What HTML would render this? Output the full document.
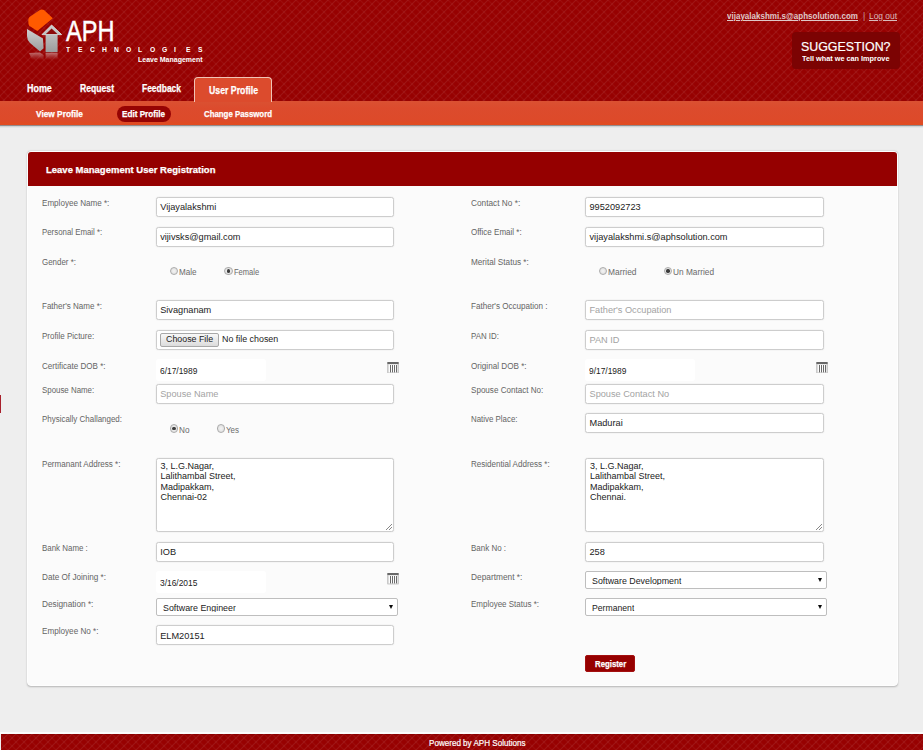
<!DOCTYPE html>
<html>
<head>
<meta charset="utf-8">
<title>Leave Management</title>
<style>
*{box-sizing:border-box;margin:0;padding:0}
html,body{width:923px;height:750px;overflow:hidden}
body{font-family:"Liberation Sans",sans-serif;background:#eeeeee;position:relative;color:#333}
.abs{position:absolute}
.t{white-space:pre;transform-origin:0 0}
#hdr{left:0;top:0;width:923px;height:101px;background:#970101}
#sub{left:0;top:101px;width:923px;height:24px;background:linear-gradient(#da5132,#dc4b2d 30%,#dd4a2a 80%,#e24c1f)}
#subshadow{left:0;top:125px;width:923px;height:3px;background:linear-gradient(#6d5a5a,#c9cfd2 40%,#eeeeee)}
#tab{left:193.5px;top:77px;width:78.5px;height:25px;background:#dc4b2d;border:1px solid #f0c4b6;border-bottom:none;border-radius:4px 4px 0 0}
#pill{left:117px;top:106px;width:54px;height:16px;border-radius:8px;background:#960303}
#sug{left:792px;top:32px;width:108px;height:37px;border-radius:4px;background:#7c0303}
#card{left:27px;top:151px;width:871px;height:534.7px;background:#fbfbfb;border:1px solid #fefefe;border-radius:4px;box-shadow:0 0.6px 1.8px rgba(0,0,0,.24)}
#cardh{left:28px;top:152px;width:869px;height:34px;background:#950000;border-radius:3px 3px 0 0}
.inp{background:#fff;border:1px solid #cdcdcd;border-radius:2.5px;box-shadow:0 0 1.5px rgba(0,0,0,.12)}
.fbtn{background:linear-gradient(#f8f8f8,#dcdcdc);border:1px solid #a8a8a8;border-radius:2px}
.date{background:#fff;width:110px;height:22px;border-radius:3px}
.sel{background:#fff;border:1px solid #bebebe;border-radius:2px;width:241.7px;height:17.3px}
.rad{width:8.5px;height:8.5px;border-radius:50%;border:1px solid #ababab;background:radial-gradient(#f4f4f4,#dadada)}
.rad i{position:absolute;left:1.6px;top:1.6px;width:3.3px;height:3.3px;border-radius:50%;background:#3c3c3c}
#ftrline{left:0;top:732px;width:923px;height:2px;background:#fbfbfb}
#ftr{left:1px;top:734px;width:922px;border-top:1px solid #8c0000;height:16px;background:#970101}
</style>
</head>
<body>
<div id="hdr" class="abs"></div>
<svg class="abs" style="left:0;top:0" width="923" height="101">
<defs><pattern id="wv" width="8" height="8" patternUnits="userSpaceOnUse"><path d="M-1 1L1 -1M-1 9L9 -1M7 9L9 7" stroke="#ffffff" stroke-opacity="0.075" stroke-width="1.15" fill="none"/><path d="M-1 -1L9 9M-1 7L1 9M7 -1L9 1" stroke="#ffffff" stroke-opacity="0.042" stroke-width="1.15" fill="none"/></pattern></defs>
<rect width="923" height="101" fill="url(#wv)"/>
</svg>
<div id="sub" class="abs"></div>
<div id="subshadow" class="abs"></div>
<div id="tab" class="abs"></div>
<div id="pill" class="abs"></div>
<div id="sug" class="abs"></div>
<svg class="abs" style="left:20px;top:5px" width="60" height="60" viewBox="0 0 60 60">
<defs>
<linearGradient id="g1" x1="0" y1="0" x2="0" y2="1"><stop offset="0" stop-color="#cfcfcf"/><stop offset="1" stop-color="#9c9c9c"/></linearGradient>
<linearGradient id="g2" x1="0" y1="0" x2="0" y2="1"><stop offset="0" stop-color="#c98686" stop-opacity=".8"/><stop offset="1" stop-color="#b56a6a" stop-opacity="0"/></linearGradient>
</defs>
<path d="M8.3 15.5Q8 13.5 9.5 12L19.5 5.2Q21.5 4 24 5L32.8 13.2L17.3 26L9.2 20.8Q8.2 19 8.3 15.5Z" fill="#ff5a00"/>
<path d="M7 24L23 33.5L23.6 43.2L20 46.6L10 38Q7 35.2 7 31Z" fill="url(#g1)"/>
<path d="M31.6 20L22 29.6L25.6 29.6L25.6 47.2L37.6 47.2L37.6 29.6L41.6 29.6Z" fill="url(#g1)"/>
<path d="M31.6 23.4L25.4 29.4L38 29.4Z" fill="#8c0a0a"/>
<path d="M31.6 20L22 29.6L41.6 29.6Z" fill="none" stroke="#d6dede" stroke-width="0.9"/>
<path d="M9 48L20 47.5L23.6 50L23.6 55L12 55Z" fill="url(#g2)"/>
<path d="M25.6 48L37.6 48L37.6 55L25.6 55Z" fill="url(#g2)"/>
</svg>
<div class="abs" style="left:0;top:395px;width:1px;height:18px;background:#a8202c"></div>
<div id="card" class="abs"></div>
<div id="cardh" class="abs"></div>
<div id="ftrline" class="abs"></div>
<div id="ftr" class="abs"></div>
<svg class="abs" style="left:0;top:734px" width="923" height="16"><rect width="923" height="16" fill="url(#wv)"/></svg>
<div class="abs inp" style="left:156px;top:196.5px;width:238px;height:20px"></div>
<div class="abs inp" style="left:156px;top:226.5px;width:238px;height:20px"></div>
<div class="abs inp" style="left:156px;top:300px;width:238px;height:20px"></div>
<div class="abs inp" style="left:156px;top:383.5px;width:238px;height:20px"></div>
<div class="abs inp" style="left:156px;top:541.8px;width:238px;height:20px"></div>
<div class="abs inp" style="left:156px;top:625.3px;width:238px;height:20px"></div>
<div class="abs inp" style="left:585px;top:196.5px;width:239px;height:20px"></div>
<div class="abs inp" style="left:585px;top:226.5px;width:239px;height:20px"></div>
<div class="abs inp" style="left:585px;top:300px;width:239px;height:20px"></div>
<div class="abs inp" style="left:585px;top:329.5px;width:239px;height:20px"></div>
<div class="abs inp" style="left:585px;top:383.5px;width:239px;height:20px"></div>
<div class="abs inp" style="left:585px;top:413px;width:239px;height:20px"></div>
<div class="abs inp" style="left:585px;top:541.8px;width:239px;height:20px"></div>
<div class="abs inp" style="left:156px;top:329.5px;width:238px;height:20px"></div>
<div class="abs fbtn" style="left:160px;top:332.5px;width:58.5px;height:14px"></div>
<div class="abs inp" style="left:156px;top:458px;width:238px;height:74px"></div>
<svg class="abs" style="left:385px;top:523px" width="8" height="8" viewBox="0 0 8 8"><path d="M7 1L1 7M7 4L4 7" stroke="#888" stroke-width="1" fill="none"/></svg>
<div class="abs inp" style="left:585px;top:458px;width:239px;height:74px"></div>
<svg class="abs" style="left:815px;top:523px" width="8" height="8" viewBox="0 0 8 8"><path d="M7 1L1 7M7 4L4 7" stroke="#888" stroke-width="1" fill="none"/></svg>
<div class="abs date" style="left:156px;top:359px"></div>
<svg class="abs" style="left:387px;top:361.8px" width="12" height="11.4" viewBox="0 0 12 11.4"><rect x="0" y="0" width="12" height="11.4" rx="1" fill="#c9c9c9"/><rect x="0.4" y="0" width="11.2" height="2" fill="#686868"/><rect x="1.6" y="2.4" width="8.9" height="8" fill="#fdfdfd"/><rect x="3" y="3" width="1" height="7.4" fill="#6a6a6a"/><rect x="5" y="3" width="1" height="7.4" fill="#6a6a6a"/><rect x="7" y="3" width="1" height="7.4" fill="#6a6a6a"/><rect x="9" y="3" width="1" height="7.4" fill="#6a6a6a"/></svg>
<div class="abs date" style="left:585px;top:359px"></div>
<svg class="abs" style="left:816px;top:361.8px" width="12" height="11.4" viewBox="0 0 12 11.4"><rect x="0" y="0" width="12" height="11.4" rx="1" fill="#c9c9c9"/><rect x="0.4" y="0" width="11.2" height="2" fill="#686868"/><rect x="1.6" y="2.4" width="8.9" height="8" fill="#fdfdfd"/><rect x="3" y="3" width="1" height="7.4" fill="#6a6a6a"/><rect x="5" y="3" width="1" height="7.4" fill="#6a6a6a"/><rect x="7" y="3" width="1" height="7.4" fill="#6a6a6a"/><rect x="9" y="3" width="1" height="7.4" fill="#6a6a6a"/></svg>
<div class="abs date" style="left:156px;top:570.5px"></div>
<svg class="abs" style="left:387px;top:573.3px" width="12" height="11.4" viewBox="0 0 12 11.4"><rect x="0" y="0" width="12" height="11.4" rx="1" fill="#c9c9c9"/><rect x="0.4" y="0" width="11.2" height="2" fill="#686868"/><rect x="1.6" y="2.4" width="8.9" height="8" fill="#fdfdfd"/><rect x="3" y="3" width="1" height="7.4" fill="#6a6a6a"/><rect x="5" y="3" width="1" height="7.4" fill="#6a6a6a"/><rect x="7" y="3" width="1" height="7.4" fill="#6a6a6a"/><rect x="9" y="3" width="1" height="7.4" fill="#6a6a6a"/></svg>
<div class="abs sel" style="left:156px;top:598.3px"></div>
<div class="abs" style="left:388.5px;top:604.5999999999999px;width:0;height:0;border-left:2.6px solid transparent;border-right:2.6px solid transparent;border-top:4.2px solid #0a0a0a"></div>
<div class="abs sel" style="left:585px;top:571.3px"></div>
<div class="abs" style="left:817.5px;top:577.5999999999999px;width:0;height:0;border-left:2.6px solid transparent;border-right:2.6px solid transparent;border-top:4.2px solid #0a0a0a"></div>
<div class="abs sel" style="left:585px;top:598.3px"></div>
<div class="abs" style="left:817.5px;top:604.5999999999999px;width:0;height:0;border-left:2.6px solid transparent;border-right:2.6px solid transparent;border-top:4.2px solid #0a0a0a"></div>
<div class="abs rad" style="left:169.8px;top:266.8px"></div>
<div class="abs rad" style="left:224px;top:266.8px"><i></i></div>
<div class="abs rad" style="left:598.8px;top:266.8px"></div>
<div class="abs rad" style="left:663.8px;top:266.8px"><i></i></div>
<div class="abs rad" style="left:169.8px;top:424px"><i></i></div>
<div class="abs rad" style="left:216.8px;top:424px"></div>
<div class="abs" style="left:585px;top:654.7px;width:50px;height:17.5px;background:#960000;border:1px solid #a31010;border-radius:2px"></div>
<div class="abs t" style="left:27.4px;top:84px;font-size:10px;line-height:10px;font-weight:bold;color:#fff;transform:scaleX(0.8922);-webkit-text-stroke:0.25px #fff;">Home</div>
<div class="abs t" style="left:80.0px;top:84px;font-size:10px;line-height:10px;font-weight:bold;color:#fff;transform:scaleX(0.8618);-webkit-text-stroke:0.25px #fff;">Request</div>
<div class="abs t" style="left:141.7px;top:84px;font-size:10px;line-height:10px;font-weight:bold;color:#fff;transform:scaleX(0.8452);-webkit-text-stroke:0.25px #fff;">Feedback</div>
<div class="abs t" style="left:208.5px;top:86px;font-size:10px;line-height:10px;font-weight:bold;color:#fff;transform:scaleX(0.8728);-webkit-text-stroke:0.25px #fff;">User Profile</div>
<div class="abs t" style="left:36.2px;top:110px;font-size:9px;line-height:9px;font-weight:bold;color:#fff;transform:scaleX(0.9241);-webkit-text-stroke:0.25px #fff;">View Profile</div>
<div class="abs t" style="left:122.4px;top:110px;font-size:9px;line-height:9px;font-weight:bold;color:#fff;transform:scaleX(0.9050);-webkit-text-stroke:0.25px #fff;">Edit Profile</div>
<div class="abs t" style="left:204.3px;top:110px;font-size:9px;line-height:9px;font-weight:bold;color:#fff;transform:scaleX(0.8714);-webkit-text-stroke:0.25px #fff;">Change Password</div>
<div class="abs t" style="left:726.6px;top:12px;font-size:9px;line-height:9px;font-weight:bold;color:#dfc8c8;transform:scaleX(0.8922);text-decoration:underline;">vijayalakshmi.s@aphsolution.com</div>
<div class="abs t" style="left:863.0px;top:12px;font-size:8.5px;line-height:8.5px;font-weight:normal;color:#c9a0a0;">|</div>
<div class="abs t" style="left:869.0px;top:12px;font-size:9px;line-height:9px;font-weight:normal;color:#d8bcbc;transform:scaleX(0.9324);text-decoration:underline;">Log out</div>
<div class="abs t" style="left:801.0px;top:41px;font-size:12px;line-height:12px;font-weight:normal;color:#fff;transform:scaleX(1.0324);-webkit-text-stroke:0.2px #fff;">SUGGESTION?</div>
<div class="abs t" style="left:801.8px;top:55px;font-size:7.4px;line-height:7.4px;font-weight:bold;color:#fff;transform:scaleX(0.9878);">Tell what we can Improve</div>
<div class="abs t" style="left:65.5px;top:17px;font-size:28.6px;line-height:28.6px;font-weight:normal;color:#fff;transform:scaleX(0.8232);-webkit-text-stroke:0.45px #fff;">APH</div>
<div class="abs t" style="left:137.8px;top:56px;font-size:8px;line-height:8px;font-weight:bold;color:#fff;transform:scaleX(0.8738);">Leave Management</div>
<div class="abs t" style="left:65.7px;top:46px;font-size:7.5px;line-height:7.5px;font-weight:bold;color:#fff;transform:scaleX(0.9000);">T</div>
<div class="abs t" style="left:77.8px;top:46px;font-size:7.5px;line-height:7.5px;font-weight:bold;color:#fff;transform:scaleX(0.9000);">E</div>
<div class="abs t" style="left:89.8px;top:46px;font-size:7.5px;line-height:7.5px;font-weight:bold;color:#fff;transform:scaleX(0.9000);">C</div>
<div class="abs t" style="left:101.9px;top:46px;font-size:7.5px;line-height:7.5px;font-weight:bold;color:#fff;transform:scaleX(0.9000);">H</div>
<div class="abs t" style="left:113.9px;top:46px;font-size:7.5px;line-height:7.5px;font-weight:bold;color:#fff;transform:scaleX(0.9000);">N</div>
<div class="abs t" style="left:126.0px;top:46px;font-size:7.5px;line-height:7.5px;font-weight:bold;color:#fff;transform:scaleX(0.9000);">O</div>
<div class="abs t" style="left:138.0px;top:46px;font-size:7.5px;line-height:7.5px;font-weight:bold;color:#fff;transform:scaleX(0.9000);">L</div>
<div class="abs t" style="left:150.1px;top:46px;font-size:7.5px;line-height:7.5px;font-weight:bold;color:#fff;transform:scaleX(0.9000);">O</div>
<div class="abs t" style="left:162.1px;top:46px;font-size:7.5px;line-height:7.5px;font-weight:bold;color:#fff;transform:scaleX(0.9000);">G</div>
<div class="abs t" style="left:174.2px;top:46px;font-size:7.5px;line-height:7.5px;font-weight:bold;color:#fff;transform:scaleX(0.9000);">I</div>
<div class="abs t" style="left:186.2px;top:46px;font-size:7.5px;line-height:7.5px;font-weight:bold;color:#fff;transform:scaleX(0.9000);">E</div>
<div class="abs t" style="left:198.2px;top:46px;font-size:7.5px;line-height:7.5px;font-weight:bold;color:#fff;transform:scaleX(0.9000);">S</div>
<div class="abs t" style="left:45.8px;top:165px;font-size:9.7px;line-height:9.7px;font-weight:bold;color:#fff;transform:scaleX(0.9807);-webkit-text-stroke:0.25px #fff;">Leave Management User Registration</div>
<div class="abs t" style="left:428.6px;top:739px;font-size:9px;line-height:9px;font-weight:normal;color:#fff;transform:scaleX(0.8972);-webkit-text-stroke:0.2px #fff;">Powered by APH Solutions</div>
<div class="abs t" style="left:41.8px;top:199px;font-size:8.5px;line-height:8.5px;font-weight:normal;color:#646464;transform:scaleX(0.9496);">Employee Name *:</div>
<div class="abs t" style="left:41.8px;top:228px;font-size:8.5px;line-height:8.5px;font-weight:normal;color:#646464;transform:scaleX(0.9248);">Personal Email *:</div>
<div class="abs t" style="left:41.8px;top:258px;font-size:8.5px;line-height:8.5px;font-weight:normal;color:#646464;transform:scaleX(0.9343);">Gender *:</div>
<div class="abs t" style="left:41.8px;top:302px;font-size:8.5px;line-height:8.5px;font-weight:normal;color:#646464;transform:scaleX(0.9446);">Father&#x27;s Name *:</div>
<div class="abs t" style="left:41.8px;top:332px;font-size:8.5px;line-height:8.5px;font-weight:normal;color:#646464;transform:scaleX(0.9443);">Profile Picture:</div>
<div class="abs t" style="left:41.8px;top:362px;font-size:8.5px;line-height:8.5px;font-weight:normal;color:#646464;transform:scaleX(0.9467);">Certificate DOB *:</div>
<div class="abs t" style="left:41.8px;top:386px;font-size:8.5px;line-height:8.5px;font-weight:normal;color:#646464;transform:scaleX(0.9283);">Spouse Name:</div>
<div class="abs t" style="left:41.8px;top:415px;font-size:8.5px;line-height:8.5px;font-weight:normal;color:#646464;transform:scaleX(0.9353);">Physically Challanged:</div>
<div class="abs t" style="left:41.8px;top:460px;font-size:8.5px;line-height:8.5px;font-weight:normal;color:#646464;transform:scaleX(0.9494);">Permanant Address *:</div>
<div class="abs t" style="left:41.8px;top:544px;font-size:8.5px;line-height:8.5px;font-weight:normal;color:#646464;transform:scaleX(0.9320);">Bank Name :</div>
<div class="abs t" style="left:41.8px;top:573px;font-size:8.5px;line-height:8.5px;font-weight:normal;color:#646464;transform:scaleX(0.9606);">Date Of Joining *:</div>
<div class="abs t" style="left:41.8px;top:600px;font-size:8.5px;line-height:8.5px;font-weight:normal;color:#646464;transform:scaleX(0.9712);">Designation *:</div>
<div class="abs t" style="left:41.8px;top:627px;font-size:8.5px;line-height:8.5px;font-weight:normal;color:#646464;transform:scaleX(0.9566);">Employee No *:</div>
<div class="abs t" style="left:471.2px;top:199px;font-size:8.5px;line-height:8.5px;font-weight:normal;color:#646464;transform:scaleX(0.9731);">Contact No *:</div>
<div class="abs t" style="left:471.2px;top:228px;font-size:8.5px;line-height:8.5px;font-weight:normal;color:#646464;transform:scaleX(0.9441);">Office Email *:</div>
<div class="abs t" style="left:471.2px;top:258px;font-size:8.5px;line-height:8.5px;font-weight:normal;color:#646464;transform:scaleX(0.9633);">Merital Status *:</div>
<div class="abs t" style="left:471.2px;top:302px;font-size:8.5px;line-height:8.5px;font-weight:normal;color:#646464;transform:scaleX(0.9499);">Father&#x27;s Occupation :</div>
<div class="abs t" style="left:471.2px;top:332px;font-size:8.5px;line-height:8.5px;font-weight:normal;color:#646464;transform:scaleX(0.9276);">PAN ID:</div>
<div class="abs t" style="left:471.2px;top:362px;font-size:8.5px;line-height:8.5px;font-weight:normal;color:#646464;transform:scaleX(0.9568);">Original DOB *:</div>
<div class="abs t" style="left:471.2px;top:386px;font-size:8.5px;line-height:8.5px;font-weight:normal;color:#646464;transform:scaleX(0.9503);">Spouse Contact No:</div>
<div class="abs t" style="left:471.2px;top:415px;font-size:8.5px;line-height:8.5px;font-weight:normal;color:#646464;transform:scaleX(0.9283);">Native Place:</div>
<div class="abs t" style="left:471.2px;top:460px;font-size:8.5px;line-height:8.5px;font-weight:normal;color:#646464;transform:scaleX(0.9462);">Residential Address *:</div>
<div class="abs t" style="left:471.2px;top:544px;font-size:8.5px;line-height:8.5px;font-weight:normal;color:#646464;transform:scaleX(0.9376);">Bank No :</div>
<div class="abs t" style="left:471.2px;top:573px;font-size:8.5px;line-height:8.5px;font-weight:normal;color:#646464;transform:scaleX(0.9799);">Department *:</div>
<div class="abs t" style="left:471.2px;top:600px;font-size:8.5px;line-height:8.5px;font-weight:normal;color:#646464;transform:scaleX(0.9406);">Employee Status *:</div>
<div class="abs t" style="left:160.2px;top:203px;font-size:9.2px;line-height:9.2px;font-weight:normal;color:#222;">Vijayalakshmi</div>
<div class="abs t" style="left:160.2px;top:233px;font-size:9.2px;line-height:9.2px;font-weight:normal;color:#222;">vijivsks@gmail.com</div>
<div class="abs t" style="left:160.2px;top:306px;font-size:9.2px;line-height:9.2px;font-weight:normal;color:#222;">Sivagnanam</div>
<div class="abs t" style="left:160.2px;top:390px;font-size:9.2px;line-height:9.2px;font-weight:normal;color:#a3a3a3;">Spouse Name</div>
<div class="abs t" style="left:160.2px;top:548px;font-size:9.2px;line-height:9.2px;font-weight:normal;color:#222;">IOB</div>
<div class="abs t" style="left:160.2px;top:632px;font-size:9.2px;line-height:9.2px;font-weight:normal;color:#222;">ELM20151</div>
<div class="abs t" style="left:589.5px;top:203px;font-size:9.2px;line-height:9.2px;font-weight:normal;color:#222;">9952092723</div>
<div class="abs t" style="left:589.5px;top:233px;font-size:9.2px;line-height:9.2px;font-weight:normal;color:#222;">vijayalakshmi.s@aphsolution.com</div>
<div class="abs t" style="left:589.5px;top:306px;font-size:9.2px;line-height:9.2px;font-weight:normal;color:#a3a3a3;">Father&#x27;s Occupation</div>
<div class="abs t" style="left:589.5px;top:336px;font-size:9.2px;line-height:9.2px;font-weight:normal;color:#a3a3a3;">PAN ID</div>
<div class="abs t" style="left:589.5px;top:390px;font-size:9.2px;line-height:9.2px;font-weight:normal;color:#a3a3a3;">Spouse Contact No</div>
<div class="abs t" style="left:589.5px;top:419px;font-size:9.2px;line-height:9.2px;font-weight:normal;color:#222;">Madurai</div>
<div class="abs t" style="left:589.5px;top:548px;font-size:9.2px;line-height:9.2px;font-weight:normal;color:#222;">258</div>
<div class="abs t" style="left:165.9px;top:335px;font-size:8.9px;line-height:8.9px;font-weight:normal;color:#222;transform:scaleX(0.9966);">Choose File</div>
<div class="abs t" style="left:222.0px;top:335px;font-size:8.9px;line-height:8.9px;font-weight:normal;color:#222;">No file chosen</div>
<div class="abs t" style="left:160.4px;top:462px;font-size:9px;line-height:9px;font-weight:normal;color:#222;">3, L.G.Nagar,</div>
<div class="abs t" style="left:160.4px;top:472px;font-size:9px;line-height:9px;font-weight:normal;color:#222;">Lalithambal Street,</div>
<div class="abs t" style="left:160.4px;top:483px;font-size:9px;line-height:9px;font-weight:normal;color:#222;">Madipakkam,</div>
<div class="abs t" style="left:160.4px;top:493px;font-size:9px;line-height:9px;font-weight:normal;color:#222;">Chennai-02</div>
<div class="abs t" style="left:589.9px;top:462px;font-size:9px;line-height:9px;font-weight:normal;color:#222;">3, L.G.Nagar,</div>
<div class="abs t" style="left:589.9px;top:472px;font-size:9px;line-height:9px;font-weight:normal;color:#222;">Lalithambal Street,</div>
<div class="abs t" style="left:589.9px;top:483px;font-size:9px;line-height:9px;font-weight:normal;color:#222;">Madipakkam,</div>
<div class="abs t" style="left:589.9px;top:493px;font-size:9px;line-height:9px;font-weight:normal;color:#222;">Chennai.</div>
<div class="abs t" style="left:159.8px;top:367px;font-size:8.6px;line-height:8.6px;font-weight:normal;color:#222;transform:scaleX(0.9782);">6/17/1989</div>
<div class="abs t" style="left:588.8px;top:367px;font-size:8.6px;line-height:8.6px;font-weight:normal;color:#222;transform:scaleX(0.9782);">9/17/1989</div>
<div class="abs t" style="left:159.8px;top:579px;font-size:8.6px;line-height:8.6px;font-weight:normal;color:#222;transform:scaleX(0.9782);">3/16/2015</div>
<div class="abs t" style="left:163.0px;top:603px;font-size:9.4px;line-height:9.4px;font-weight:normal;color:#222;transform:scaleX(0.9450);height:8.6px;overflow:hidden;">Software Engineer</div>
<div class="abs t" style="left:592.0px;top:576px;font-size:9.4px;line-height:9.4px;font-weight:normal;color:#222;transform:scaleX(0.9426);height:8.6px;overflow:hidden;">Software Development</div>
<div class="abs t" style="left:592.0px;top:603px;font-size:9.4px;line-height:9.4px;font-weight:normal;color:#222;transform:scaleX(0.9224);height:8.6px;overflow:hidden;">Permanent</div>
<div class="abs t" style="left:179.2px;top:268px;font-size:8.6px;line-height:8.6px;font-weight:normal;color:#6a6a6a;transform:scaleX(0.9442);">Male</div>
<div class="abs t" style="left:233.9px;top:268px;font-size:8.6px;line-height:8.6px;font-weight:normal;color:#6a6a6a;transform:scaleX(0.8794);">Female</div>
<div class="abs t" style="left:608.2px;top:268px;font-size:8.6px;line-height:8.6px;font-weight:normal;color:#6a6a6a;transform:scaleX(0.9780);">Married</div>
<div class="abs t" style="left:673.2px;top:268px;font-size:8.6px;line-height:8.6px;font-weight:normal;color:#6a6a6a;transform:scaleX(0.9644);">Un Married</div>
<div class="abs t" style="left:179.2px;top:426px;font-size:8.6px;line-height:8.6px;font-weight:normal;color:#6a6a6a;transform:scaleX(0.9545);">No</div>
<div class="abs t" style="left:226.2px;top:426px;font-size:8.6px;line-height:8.6px;font-weight:normal;color:#6a6a6a;transform:scaleX(0.9265);">Yes</div>
<div class="abs t" style="left:595.0px;top:660px;font-size:8.6px;line-height:8.6px;font-weight:bold;color:#fff;transform:scaleX(0.9072);-webkit-text-stroke:0.25px #fff;">Register</div>
</body>
</html>
